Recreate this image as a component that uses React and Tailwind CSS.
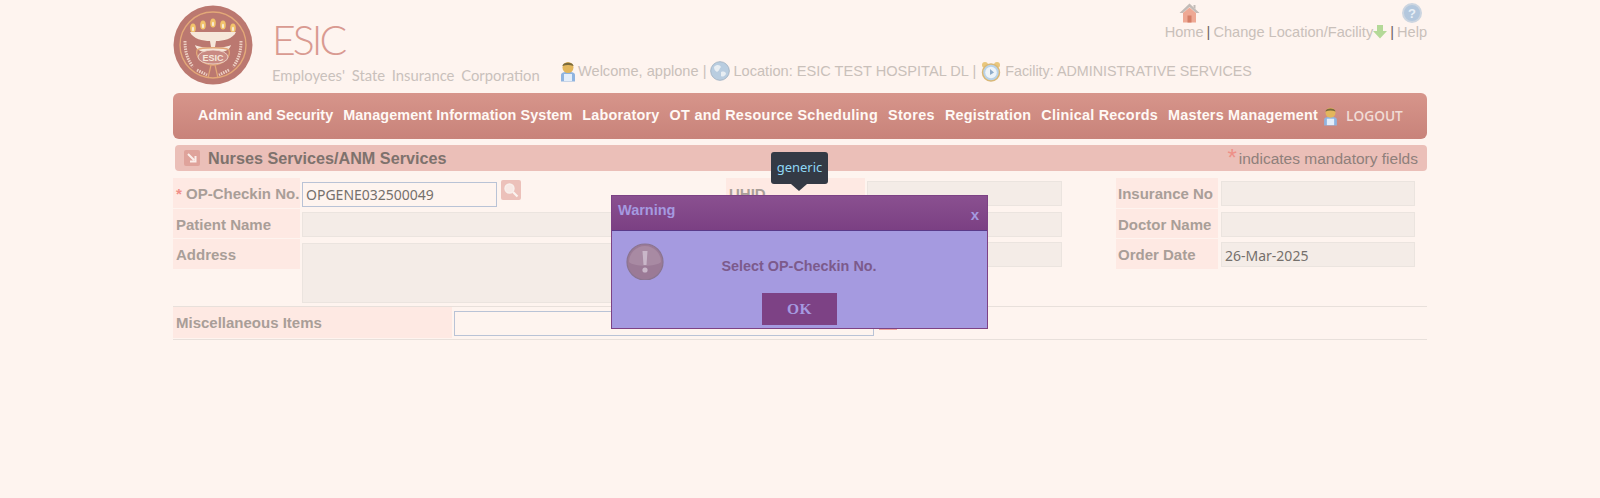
const sans = "font-['Liberation_Sans',Arial,sans-serif]";
const noto = "font-['Noto_Sans',sans-serif]";

function Logo() {
  return (
    <svg width="80" height="80" viewBox="0 0 80 80" className="block">
      <circle cx="40" cy="40" r="39.5" fill="#bb7870" />
      <circle cx="40" cy="40" r="33" fill="none" stroke="#e3a878" strokeWidth="1.4" />
      {[20, 30, 40, 50, 60].map((x, i) => (
        <g key={x}>
          <ellipse cx={x} cy={i === 2 ? 18 : i === 0 || i === 4 ? 23 : 20} rx="2.8" ry="4.6" fill="#f2c36b" />
          <ellipse cx={x} cy={i === 2 ? 19 : i === 0 || i === 4 ? 24 : 21} rx="1.1" ry="2.2" fill="#f7ead6" />
        </g>
      ))}
      <path d="M17 27 H63 C60 34 50 36 43 36 L42 42 H38 L37 36 C30 36 20 34 17 27 Z" fill="#f6e7da" />
      <path d="M22 40 C30 44 50 44 58 40 C56 47 48 48 40 46 C32 48 24 47 22 40 Z" fill="#f6e7da" />
      <path d="M24 45 C28 42 52 42 56 45 C58 52 50 60 40 60 C30 60 22 52 24 45 Z" fill="none" stroke="#e3a878" strokeWidth="1.3" />
      <ellipse cx="40" cy="52" rx="15" ry="7" fill="#c98a83" stroke="#f3ddd0" strokeWidth="0.8" />
      <text x="40" y="55.5" textAnchor="middle" fontSize="9" fontWeight="700" fill="#f6e7da" fontFamily="Liberation Sans">ESIC</text>
      <path d="M38 60 L35 73 M42 60 L45 73" stroke="#e3a878" strokeWidth="1.2" />
      <path d="M12 36 C12 46 14 54 20 62 M24 65 L34 70" stroke="#edd0c4" strokeWidth="3" strokeDasharray="1.5 1" fill="none" />
      <path d="M68 36 C68 46 66 54 60 62 M56 65 L46 70" stroke="#edd0c4" strokeWidth="3" strokeDasharray="1.5 1" fill="none" />
    </svg>
  );
}

function UserIcon({ w = 16, h = 22 }) {
  return (
    <svg width={w} height={h} viewBox="0 0 16 22" className="shrink-0">
      <path d="M1 15 C1 12.5 4 12 8 12 C12 12 15 12.5 15 15 V21.5 H1 Z" fill="#8fb4e0" />
      <path d="M4 14 H12 V21 H4 Z" fill="#e4eefa" />
      <circle cx="8" cy="7.5" r="5.5" fill="#e3b65c" />
      <path d="M2.5 6 C2.5 1.5 13.5 1.5 13.5 6 C10 4.6 6 4.6 2.5 6 Z" fill="#7a6a3c" />
    </svg>
  );
}

function Globe() {
  return (
    <svg width="20" height="20" viewBox="0 0 20 20" className="shrink-0">
      <circle cx="10" cy="10" r="9.3" fill="#b9cde0" stroke="#a7b7c7" />
      <path d="M4 6 C7 3 10 4 11 6 C9 8 10 9 7 11 C5 10 4 8 4 6 Z M11 11 C14 10 16 11 16 13 C14 16 12 16 11 15 Z" fill="#e8eef3" />
    </svg>
  );
}

function Clock() {
  return (
    <svg width="20" height="21" viewBox="0 0 20 21" className="shrink-0">
      <circle cx="4" cy="4" r="3" fill="#eac77c" />
      <circle cx="16" cy="4" r="3" fill="#eac77c" />
      <circle cx="10" cy="11.5" r="8.5" fill="#b9d3ea" stroke="#d9b877" strokeWidth="1.5" />
      <circle cx="10" cy="11.5" r="5.8" fill="#eef4f9" />
      <path d="M9 8 L13 11.5 L9 14 Z" fill="#8eaccb" />
    </svg>
  );
}

function HomeIcon() {
  return (
    <svg width="21" height="20" viewBox="0 0 21 20" className="ml-[10px] block">
      <path d="M10.5 0.5 L20.5 10 L17 10 L10.5 4 L4 10 L0.5 10 Z" fill="#c3bcb8" />
      <path d="M4 10 L10.5 4.5 L17 10 V19.5 H4 Z" fill="#eea894" />
      <path d="M8.5 12.5 H12.5 V19.5 H8.5 Z" fill="#d47f68" />
      <path d="M14.5 2 H16.5 V6 L14.5 4.5 Z" fill="#c3bcb8" />
    </svg>
  );
}

function HelpIcon() {
  return (
    <div className="flex h-[20px] w-[20px] items-center justify-center rounded-full border-2 border-[#ccd5e0] bg-[#b3c7dd] text-[13px] leading-none font-bold text-[#e8eff6]">?</div>
  );
}

function ArrowGreen() {
  return (
    <svg width="14" height="15" viewBox="0 0 14 15" className="mb-[1px] shrink-0">
      <path d="M4 1 H10 V7 H14 L7 14.5 L0 7 H4 Z" fill="#b4d998" />
    </svg>
  );
}

function SearchBtn({ className = "" }) {
  return (
    <div className={`flex h-[20px] w-[20px] items-center justify-center rounded-[2px] bg-[#ecc1ba] ${className}`}>
      <svg width="16" height="16" viewBox="0 0 16 16">
        <circle cx="6.5" cy="6.5" r="4.5" fill="#f8e9e5" stroke="#f8f0ec" strokeWidth="1.4" />
        <path d="M10 10 L14.5 14.5" stroke="#fbf3ef" strokeWidth="2.2" />
      </svg>
    </div>
  );
}

function Label({ w, children, h = "h-[30px]", pl = "pl-[3px]" }) {
  return (
    <div className={`${h} ${w} ${pl} shrink-0 bg-[#fee9e3] pt-[7px] text-[15px] leading-[18px] font-bold text-[#a99e98] ${sans}`}>
      {children}
    </div>
  );
}

function Disabled({ w = "w-[195px]", h = "h-[25px]", mt = "mt-[3px]", value = "" }) {
  return (
    <div className={`${w} ${h} ${mt} shrink-0 border border-[#ebe4df] bg-[#f4ece7] pl-[3px] text-[14px] leading-[25px] text-[#75706c] ${noto}`}>{value}</div>
  );
}

export default function App() {
  return (
    <div className={`relative h-[498px] w-full overflow-hidden bg-[#fef4ef] ${sans}`}>
      <div className="mx-auto w-[1254px]">
        <header className="flex h-[93px]">
          <div className="mt-[5px] shrink-0"><Logo /></div>
          <div className="ml-[19px] w-[288px] shrink-0">
            <div className="mt-[14px] font-['Lato',sans-serif] text-[41px] leading-[52px] font-light tracking-[-3px] text-[#d99a91]">ESIC</div>
            <div className="mt-[-1px] whitespace-nowrap font-['Lato',sans-serif] text-[14.8px] leading-[20px] [word-spacing:3px] text-[#c9c1bc]">Employees' State Insurance Corporation</div>
          </div>
          <div className="flex-1">
            <div className="flex h-[41px] items-end justify-end pb-[1px] text-[14.6px] leading-[16px] text-[#c9c0ba]">
              <div className="flex flex-col items-center">
                <HomeIcon />
                <span className="mt-[1px]">Home</span>
              </div>
              <span className="mx-[3px] text-[#6d6764]">|</span>
              <span>Change Location/Facility</span>
              <ArrowGreen />
              <span className="mx-[3px] text-[#6d6764]">|</span>
              <div className="flex flex-col items-center">
                <HelpIcon />
                <span className="mt-[1px]">Help</span>
              </div>
            </div>
            <div className="mt-[20px] flex h-[20px] items-center whitespace-nowrap text-[14.6px] leading-[20px] text-[#c9c0ba]">
              <UserIcon />
              <span className="ml-[2px]">Welcome, applone |</span>
              <span className="ml-[4px]"><Globe /></span>
              <span className="ml-[3px]">Location: ESIC TEST HOSPITAL DL |</span>
              <span className="ml-[5px]"><Clock /></span>
              <span className="ml-[4px] text-[14.3px]">Facility: ADMINISTRATIVE SERVICES</span>
            </div>
          </div>
        </header>

        <nav className="flex h-[46px] items-center rounded-[6px] bg-gradient-to-b from-[#d7958b] to-[#c8837a] pl-[25px] text-[14.4px] font-bold text-[#fff9f5]">
          <div className="flex gap-[10px] whitespace-nowrap">
            <span>Admin and Security</span>
            <span className="tracking-[0.1px]">Management Information System</span>
            <span className="tracking-[0.2px]">Laboratory</span>
            <span className="tracking-[0.3px]">OT and Resource Scheduling</span>
            <span className="tracking-[0.35px]">Stores</span>
            <span className="tracking-[0.2px]">Registration</span>
            <span className="tracking-[0.25px]">Clinical Records</span>
            <span className="tracking-[0.2px]">Masters Management</span>
          </div>
          <span className="ml-[5px]"><UserIcon w={15} h={20} /></span>
          <span className="ml-[8px] font-['Open_Sans',sans-serif] text-[13.7px] font-semibold text-[#f1dcd6]">LOGOUT</span>
        </nav>

        <div className="mt-[6px] ml-[2px] flex h-[26px] items-center justify-between rounded-[4px] bg-[#ebbfb8] px-[9px]">
          <div className="flex items-center">
            <div className="flex h-[16px] w-[16px] items-center justify-center rounded-[2px] bg-[#dfa39b]">
              <svg width="10" height="10" viewBox="0 0 10 10"><path d="M1 1 L7 7 M8.5 3 V8.5 H3" stroke="#fbeeea" strokeWidth="2" fill="none" /></svg>
            </div>
            <span className="mt-[1px] ml-[8px] text-[16.2px] font-bold text-[#7e726d]">Nurses Services/ANM Services</span>
          </div>
          <div className="flex items-center text-[15.5px] text-[#8f807b]">
            <span className="mr-[2px] text-[24px] leading-[20px] text-[#ee9088]">*</span>
            <span className="mt-[1px]">indicates mandatory fields</span>
          </div>
        </div>

        <section className="mt-[7px] flex h-[128px]">
          <div className="flex w-[553px] shrink-0 flex-col gap-[1px]">
            <div className="flex gap-[2px]">
              <Label w="w-[127px]"><span className="text-[#f08f88]">* </span>OP-Checkin No.</Label>
              <div className={`mt-[4px] h-[25px] w-[195px] border border-[#b9c3d6] bg-[#fef4ef] pl-[3px] text-[14px] leading-[23px] text-[#75706c] ${noto}`}>OPGENE032500049</div>
              <SearchBtn className="mt-[2px] ml-[2px]" />
            </div>
            <div className="flex gap-[2px]">
              <Label w="w-[127px]" h="h-[29px]">Patient Name</Label>
              <Disabled w="w-[395px]" />
            </div>
            <div className="flex gap-[2px]">
              <Label w="w-[127px]">Address</Label>
              <Disabled w="w-[395px]" h="h-[60px]" mt="mt-[4px]" />
            </div>
          </div>
          <div className="flex w-[390px] shrink-0 flex-col gap-[1px]">
            <div className="flex gap-[2px]">
              <Label w="w-[139px]">UHID</Label>
              <Disabled />
            </div>
            <div className="flex gap-[2px]">
              <Label w="w-[139px]" h="h-[29px]"></Label>
              <Disabled />
            </div>
            <div className="flex gap-[2px]">
              <Label w="w-[139px]"></Label>
              <Disabled />
            </div>
          </div>
          <div className="flex flex-col gap-[1px]">
            <div className="flex gap-[3px]">
              <Label w="w-[102px]" pl="pl-[2px]">Insurance No</Label>
              <Disabled w="w-[194px]" />
            </div>
            <div className="flex gap-[3px]">
              <Label w="w-[102px]" h="h-[29px]" pl="pl-[2px]">Doctor Name</Label>
              <Disabled w="w-[194px]" />
            </div>
            <div className="flex gap-[3px]">
              <Label w="w-[102px]" pl="pl-[2px]">Order Date</Label>
              <Disabled w="w-[194px]" value="26-Mar-2025" />
            </div>
          </div>
        </section>

        <section className="flex h-[34px] border-y border-[#e8e0db]">
          <Label w="w-[279px]" h="h-[31px]">Miscellaneous Items</Label>
          <div className="mt-[4px] ml-[2px] h-[25px] w-[420px] border border-[#b9c3d6] bg-[#fef4ef]" />
          <div className="mt-[3px] ml-[5px] h-[20px] w-[18px] bg-[#f0aaa2]" />
        </section>
      </div>

      <div className={`absolute top-[152px] left-[771px] h-[32px] w-[57px] rounded-[3px] bg-[#343a45] text-center text-[13px] leading-[31px] text-[#8fd8f5] ${noto}`}>
        generic
        <div className="absolute top-[32px] left-[20px] h-0 w-0 border-x-[8px] border-t-[7px] border-x-transparent border-t-[#343a45]" />
      </div>

      <div className="absolute top-[195px] left-[611px] h-[134px] w-[377px] border border-[#7d4285] bg-[#a59ae0]">
        <div className="flex h-[35px] justify-between border-b border-[#5a3a8a] bg-gradient-to-b from-[#8a5090] to-[#7b4083] pr-[8px] pl-[6px] text-[#a59ae0]">
          <span className="pt-[5px] text-[14.5px] leading-[18px] font-bold">Warning</span>
          <span className="pt-[10px] text-[15px] leading-[18px] font-bold">x</span>
        </div>
        <div className="relative h-[97px]">
          <svg width="38" height="37" viewBox="0 0 38 37" className="absolute top-[12px] left-[14px]">
            <circle cx="19" cy="19" r="18" fill="#9b7a96" stroke="#8a7590" strokeWidth="1.2" />
            <path d="M3 19 A16 16 0 0 1 35 19 C30 24 8 24 3 19 Z" fill="#a88aa3" />
            <path d="M16.5 8 H21.5 L20.5 22 H17.5 Z" fill="#c9b7c9" />
            <circle cx="19" cy="27" r="2.6" fill="#c9b7c9" />
          </svg>
          <div className="absolute top-[25px] right-0 left-0 pr-[1px] text-center text-[14.4px] leading-[20px] font-bold text-[#7c5a8c]">Select OP-Checkin No.</div>
          <div className="absolute top-[62px] left-[150px] flex h-[32px] w-[75px] items-center justify-center bg-[#7d4285] font-['Liberation_Serif',serif] text-[15.5px] font-bold tracking-[0.5px] text-[#a59ae0]">OK</div>
        </div>
      </div>
    </div>
  );
}
